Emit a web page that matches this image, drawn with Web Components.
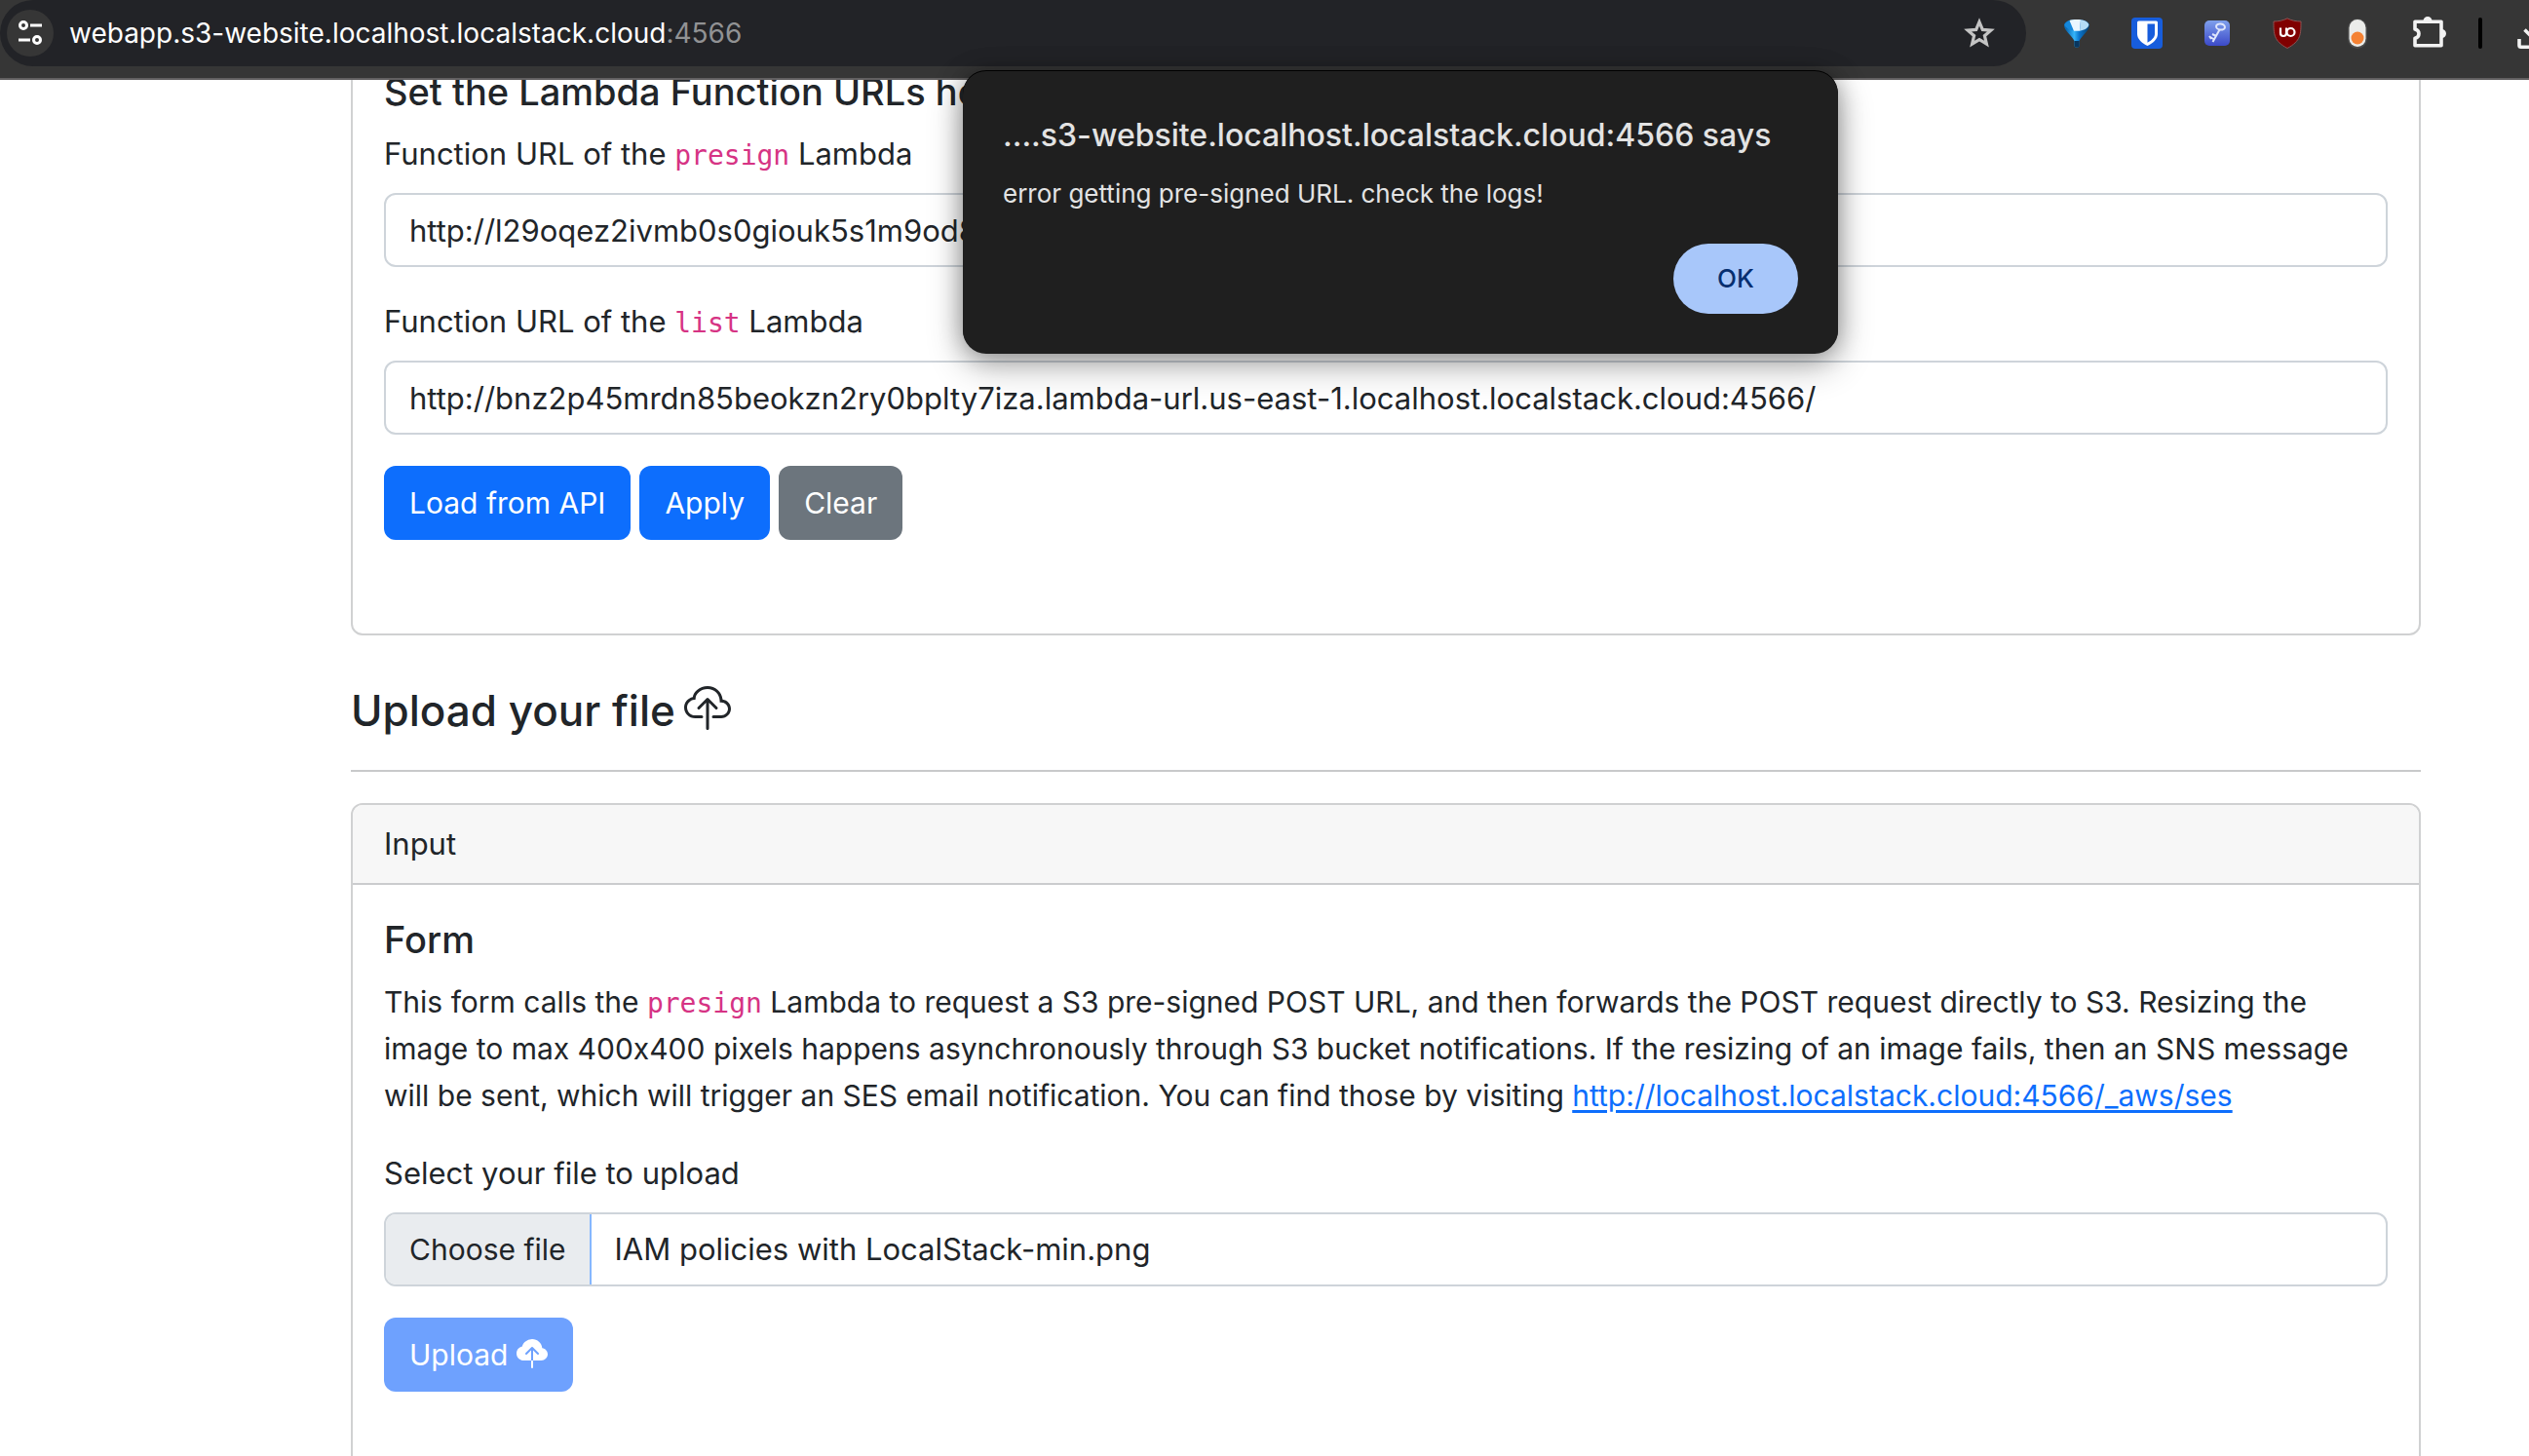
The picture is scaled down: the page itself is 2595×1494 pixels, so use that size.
<!DOCTYPE html>
<html lang="en">
<head>
<meta charset="utf-8">
<title>Serverless image resizer</title>
<style>
  html, body { margin: 0; height: 100%; }
  body {
    background: #fff; color: #212529; overflow: hidden;
    font-family: Inter, "Liberation Sans", sans-serif; font-size: 31px; line-height: 48px;
    font-variant-ligatures: no-contextual;
    --mono: "DejaVu Sans Mono", "Liberation Mono", monospace;
    --copy: 30px;
  }
</style>
</head>
<body>
<resizer-app></resizer-app>

<template id="t-resizer-app">
  <style>
    :host { display: flex; flex-direction: column; height: 100vh; overflow: hidden; }
    browser-bar { flex: none; }
    main { flex: 1; min-height: 0; overflow: hidden; }
    .scrolled { margin: -46px 111px 0 360px; }
    h4 { margin: 48px 0 0; font-size: 44px; line-height: 58px; font-weight: 500; display: flex; gap: 9px; }
    h4 svg { width: 48px; height: 48px; margin-top: 4px; fill: currentColor; }
    hr { margin: 32px 0; border: 0; border-top: 2px solid #c8c9ca; }
    h5 { margin: 0 0 16px; font-size: 38px; line-height: 48px; font-weight: 500; }
    p { margin: 0 0 32px; font-size: var(--copy); }
    a { color: #0d6efd; text-underline-offset: 4px; text-decoration-thickness: 3px; }
    code { font-family: var(--mono); font-size: 28px; line-height: 1; color: #d63384; }
    .actions { display: flex; gap: 9px; padding-bottom: 64px; font-size: var(--copy); }
    url-field, file-field { margin-bottom: 32px; }
  </style>
  <browser-bar></browser-bar>
  <main>
    <div class="scrolled">
      <content-card>
        <h5>Set the Lambda Function URLs here</h5>
        <url-field name="presign" value="http://l29oqez2ivmb0s0giouk5s1m9od8"></url-field>
        <url-field name="list" value="http://bnz2p45mrdn85beokzn2ry0bplty7iza.lambda-url.us-east-1.localhost.localstack.cloud:4566/"></url-field>
        <div class="actions">
          <action-button>Load from API</action-button>
          <action-button>Apply</action-button>
          <action-button variant="secondary">Clear</action-button>
        </div>
      </content-card>
      <h4>Upload your file
        <svg viewBox="0 0 16 16" aria-hidden="true"><path fill-rule="evenodd" d="M4.406 1.342A5.53 5.53 0 0 1 8 0c2.69 0 4.923 2 5.166 4.579C14.758 4.804 16 6.137 16 7.773 16 9.569 14.502 11 12.687 11H10a.5.5 0 0 1 0-1h2.688C13.979 10 15 8.988 15 7.773c0-1.216-1.02-2.228-2.313-2.228h-.5v-.5C12.188 2.825 10.328 1 8 1a4.53 4.53 0 0 0-2.941 1.1c-.757.652-1.153 1.438-1.153 2.055v.448l-.445.049C2.064 4.805 1 5.952 1 7.318 1 8.785 2.23 10 3.781 10H6a.5.5 0 0 1 0 1H3.781C1.708 11 0 9.366 0 7.318c0-1.763 1.266-3.223 2.942-3.593.143-.863.698-1.723 1.464-2.383z"/><path fill-rule="evenodd" d="M7.646 4.146a.5.5 0 0 1 .708 0l3 3a.5.5 0 0 1-.708.708L8.5 5.707V14.5a.5.5 0 0 1-1 0V5.707L5.354 7.854a.5.5 0 1 1-.708-.708l3-3z"/></svg>
      </h4>
      <hr>
      <content-card label="Input">
        <h5>Form</h5>
        <p>This form calls the <code>presign</code> Lambda to request a S3 pre-signed POST URL, and then forwards the POST request directly to S3. Resizing the image to max 400x400 pixels happens asynchronously through S3 bucket notifications. If the resizing of an image fails, then an SNS message will be sent, which will trigger an SES email notification. You can find those by visiting <a href="http://localhost.localstack.cloud:4566/_aws/ses">http://localhost.localstack.cloud:4566/_aws/ses</a></p>
        <file-field label="Select your file to upload" filename="IAM policies with LocalStack-min.png"></file-field>
        <div class="actions">
          <action-button disabled>Upload
            <svg slot="icon" width="32" height="32" viewBox="0 0 16 16" fill="currentColor" aria-hidden="true"><path fill-rule="evenodd" d="M8 0a5.53 5.53 0 0 0-3.594 1.342c-.766.66-1.321 1.52-1.464 2.383C1.266 4.095 0 5.555 0 7.318 0 9.366 1.708 11 3.781 11H7.5V5.707L5.354 7.854a.5.5 0 1 1-.708-.708l3-3a.5.5 0 0 1 .708 0l3 3a.5.5 0 0 1-.708.708L8.5 5.707V11h4.188C14.502 11 16 9.57 16 7.773c0-1.636-1.242-2.969-2.834-3.194C12.923 1.999 10.69 0 8 0zm-.5 14.5V11h1v3.5a.5.5 0 0 1-1 0z"/></svg>
          </action-button>
        </div>
      </content-card>
    </div>
  </main>
  <alert-dialog heading="....s3-website.localhost.localstack.cloud:4566 says">error getting pre-signed URL. check the logs!</alert-dialog>
</template>

<template id="t-browser-bar">
  <style>
    :host { display: flex; height: 80px; border-bottom: 2px solid #626061; background: #363636; overflow: hidden; }
    .address { flex: 1; height: 68px; box-sizing: border-box; padding: 0 32px 0 7px; border-radius: 34px; background: #222327; display: flex; align-items: center; }
    button { border: 0; padding: 0; background: none; display: flex; align-items: center; justify-content: center; flex: none; }
    .site { width: 48px; height: 48px; border-radius: 50%; background: #363636; margin-right: 16px; }
    .url { flex: 1; color: #fff; font-size: 28px; line-height: 40px; }
    .port { color: #919294; }
    .tools { flex: none; height: 68px; display: flex; align-items: center; padding-left: 36px; }
    .ext { display: flex; gap: 40px; }
    .divider { width: 4px; height: 32px; border-radius: 2px; background: #000; margin: 0 36px; }
    .download { width: 12px; overflow: hidden; justify-content: flex-start; }
    svg { display: block; flex: none; overflow: visible; }
  </style>
  <div class="address">
    <button class="site" aria-label="View site information">
      <svg width="26" height="26" viewBox="0 0 26 26" fill="none" stroke="#fff" stroke-width="3"><circle cx="6" cy="5" r="3.500"/><path d="M13 5h12M1 20h12"/><circle cx="20" cy="20" r="3.500"/></svg>
    </button>
    <span class="url">webapp.s3-website.localhost.localstack.cloud<span class="port">:4566</span></span>
    <button aria-label="Bookmark this page">
      <svg width="32" height="32" viewBox="0 0 32 32" fill="none" stroke="#c4c4c4" stroke-width="3.200"><path d="M16 4.500l3.300 7.900 8.600.7-6.500 5.600 2 8.400-7.400-4.500-7.400 4.500 2-8.400-6.500-5.600 8.600-.7z"/></svg>
    </button>
  </div>
  <div class="tools">
    <div class="ext">
      <button aria-label="Funnel extension">
        <svg width="32" height="32" viewBox="0 0 32 32">
          <defs><linearGradient id="fg" x1="0" x2="1"><stop offset=".1" stop-color="#0b6cb8"/><stop offset=".4" stop-color="#35b4f8"/><stop offset=".6" stop-color="#0a74cc"/><stop offset="1" stop-color="#06406f"/></linearGradient></defs>
          <path d="M3 8C3 0 29 0 29 8C29 13 21 19 18.500 24V29q0 1.500-2.500 1.500t-2.500-1.500V24C11 19 3 13 3 8z" fill="url(#fg)"/>
          <path d="M3.500 7.500C4 5.500 6 4 8.500 3L13 13.500C8 13 4 10 3.500 7.500z" fill="#1588dc"/>
          <path d="M8.500 3C11 2.200 16 1.900 20 2.300L19 13.700H13z" fill="#e9f6ff"/>
          <path d="M20 2.300C25 3 28 5 28.300 7.500C28 10.500 24 13 19 13.700z" fill="#b4dcf5"/>
          <path d="M13.500 24h5v5q0 1.500-2.500 1.500t-2.500-1.500z" fill="#08365f"/>
        </svg>
      </button>
      <button aria-label="Password manager">
        <svg width="32" height="32" viewBox="0 0 32 32"><rect width="32" height="32" rx="4" fill="#175ddc"/><path d="M6 5q0-1.500 1.500-1.500h18Q27 3.500 27 5v12c0 5-5 9.500-10.500 12C11 26.500 6 22 6 17z" fill="#fff"/><path d="M16.500 6.500H24V17c0 3.500-3.500 6.500-7.500 8.700z" fill="#175ddc"/></svg>
      </button>
      <button aria-label="Key extension">
        <svg width="32" height="32" viewBox="0 0 32 32"><defs><linearGradient id="kg" x2="0" y2="1"><stop offset="0" stop-color="#7fa0ec"/><stop offset="1" stop-color="#3b49c8"/></linearGradient></defs><rect x="3" y="3" width="26" height="26" rx="5" fill="url(#kg)"/><g fill="none" stroke="#dfe6fb" stroke-width="2"><ellipse cx="19.500" cy="9.500" rx="4.500" ry="3" transform="rotate(10 19.500 9.500)"/><path d="M18.500 12.500L11.500 25M15 19l-4-2M13 22.500l-4-2.500M8 19l2 3"/></g></svg>
      </button>
      <button aria-label="Content blocker">
        <svg width="32" height="32" viewBox="0 0 32 32"><path d="M16 .800C12 3 7 4 2 4c0 13 0 20 14 27.500C30 24 30 17 30 4c-5 0-10-1-14-3.200z" fill="#800000" stroke="#8b5555"/><g fill="none" stroke="#fff" stroke-width="2.200"><path d="M9 10.500v5.500q0 3 3 3t3-3v-5.500"/><circle cx="19.500" cy="15" r="4"/></g></svg>
      </button>
      <button aria-label="Toggle extension">
        <svg width="32" height="32" viewBox="0 0 32 32"><rect x="6" y="1" width="20" height="31" rx="10" fill="#4a4a4a"/><rect x="7.500" y="2" width="17" height="28" rx="8.500" fill="#ebecea"/><circle cx="16" cy="21" r="6.500" fill="#f58233"/></svg>
      </button>
      <button aria-label="Extensions">
        <svg width="32" height="32" viewBox="0 0 32 32"><path d="M3 4.200h27v24.500H3v-7.400c2.500-.5 4-2 4-4.700s-1.500-4.200-4-4.700z" fill="none" stroke="#f2f2f2" stroke-width="3.600" stroke-linejoin="round"/><path d="M11.500 3.500a4.500 4.500 0 0 1 9 0zM30.500 12a4.500 4.500 0 0 1 0 9z" fill="#f2f2f2"/></svg>
      </button>
    </div>
    <span class="divider"></span>
    <button class="download" aria-label="Downloads">
      <svg width="32" height="32" viewBox="0 0 32 32" fill="none" stroke="#f2f2f2" stroke-width="3.600"><path d="M2 22v6.500q0 1.700 1.700 1.700h24.600q1.700 0 1.700-1.700V22M7.500 12.500L16 21l8.500-8.500M16 0v20"/></svg>
    </button>
  </div>
</template>

<template id="t-content-card">
  <style>
    :host { display: block; border: 2px solid #d0d1d2; border-radius: 12px; overflow: hidden; background: #fff; }
    header { padding: 16px 32px; background: #f7f7f7; border-bottom: 2px solid #cbccce; }
    .body { padding: 32px; }
  </style>
  <header></header>
  <div class="body"><slot></slot></div>
</template>

<template id="t-url-field">
  <style>
    :host { display: flex; flex-direction: column; gap: 16px; }
    code { font-family: var(--mono); font-size: 28px; line-height: 1; color: #d63384; }
    input { box-sizing: border-box; width: 100%; height: 76px; padding: 12px 24px; border: 2px solid #ced4da; border-radius: 12px; background: #fff; color: inherit; font: inherit; outline: none; }
  </style>
  <label for="url">Function URL of the <code></code> Lambda</label>
  <input id="url" type="text">
</template>

<template id="t-file-field">
  <style>
    :host { display: flex; flex-direction: column; gap: 16px; }
    .control { display: flex; border: 2px solid #ced4da; border-radius: 12px; overflow: hidden; background: #fff; }
    .choose { padding: 12px 24px; background: #e9ecef; border-right: 2px solid #86b7fe; font-size: var(--copy); }
    .name { flex: 1; padding: 12px 24px; }
    input { position: absolute; width: 1px; height: 1px; opacity: 0; pointer-events: none; }
  </style>
  <label class="caption" for="file"></label>
  <div class="control">
    <label class="choose" for="file">Choose file</label><span class="name"></span>
    <input id="file" type="file" tabindex="-1">
  </div>
</template>

<template id="t-action-button">
  <style>
    :host { display: block; }
    button { display: flex; gap: 9px; align-items: center; height: 76px; padding: 0 26px; border: 0; border-radius: 12px; background: #0d6efd; color: #fff; font: inherit; white-space: nowrap; }
    button:disabled { background: #6ea1fe; }
    :host([variant="secondary"]) button { background: #6c757d; }
  </style>
  <button type="button"><span><slot></slot></span><slot name="icon"></slot></button>
</template>

<template id="t-alert-dialog">
  <style>
    :host { position: absolute; left: 988px; top: 73px; width: 898px; }
    dialog { position: static; display: flex; flex-direction: column; width: auto; margin: 0; padding: 44px 41px 41px; box-sizing: border-box; border: 0; border-radius: 24px; background: #1f1f1f; color: #e3e3e3; box-shadow: 0 -1px 0 #000, 0 12px 36px rgba(0,0,0,.3), 0 0 24px rgba(0,0,0,.3); }
    h1 { margin: 0 0 20px; font-size: 32px; line-height: 44px; font-weight: 500; white-space: nowrap; }
    p { margin: 0; font-size: 26px; line-height: 36px; }
    button { align-self: flex-end; margin-top: 33px; width: 128px; height: 72px; border: 0; border-radius: 36px; background: #a8c7fa; color: #062e6f; font: 500 26px/36px Inter, sans-serif; }
  </style>
  <dialog open aria-labelledby="h"><h1 id="h"></h1><p><slot></slot></p><button type="button">OK</button></dialog>
</template>

<script>
  class TemplateElement extends HTMLElement {
    constructor() {
      super();
      const t = document.getElementById('t-' + this.localName);
      this.attachShadow({ mode: 'open' }).append(t.content.cloneNode(true));
    }
    $(selector) { return this.shadowRoot.querySelector(selector); }
  }
  class BrowserBar extends TemplateElement {}
  class ContentCard extends TemplateElement {
    connectedCallback() {
      const label = this.getAttribute('label');
      if (label) this.$('header').textContent = label;
      else this.$('header').remove();
    }
  }
  class UrlField extends TemplateElement {
    connectedCallback() {
      this.$('code').textContent = this.getAttribute('name');
      this.$('input').value = this.getAttribute('value');
    }
  }
  class FileField extends TemplateElement {
    connectedCallback() {
      this.$('.caption').textContent = this.getAttribute('label');
      this.$('.name').textContent = this.getAttribute('filename');
      this.$('input').addEventListener('change', e => {
        if (e.target.files[0]) this.$('.name').textContent = e.target.files[0].name;
      });
    }
  }
  class ActionButton extends TemplateElement {
    connectedCallback() { this.$('button').disabled = this.hasAttribute('disabled'); }
  }
  class AlertDialog extends TemplateElement {
    connectedCallback() {
      this.$('h1').textContent = this.getAttribute('heading');
      this.$('button').addEventListener('click', () => this.remove());
    }
  }
  class ResizerApp extends TemplateElement {}
  customElements.define('browser-bar', BrowserBar);
  customElements.define('content-card', ContentCard);
  customElements.define('url-field', UrlField);
  customElements.define('file-field', FileField);
  customElements.define('action-button', ActionButton);
  customElements.define('alert-dialog', AlertDialog);
  customElements.define('resizer-app', ResizerApp);
</script>
</body>
</html>
